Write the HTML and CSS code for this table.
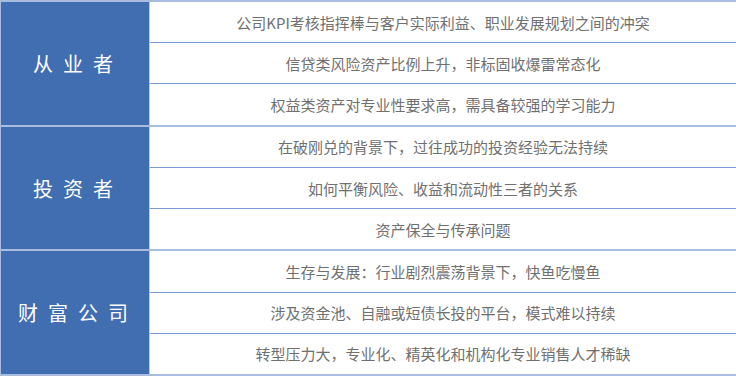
FILE: index.html
```html
<!DOCTYPE html>
<html lang="zh">
<head>
<meta charset="utf-8">
<link rel="stylesheet" href="styles.css">
</head>
<body>
<div class="table">
  <div class="group">
    <div class="label">从业者</div>
    <div class="items">
      <div class="item">公司KPI考核指挥棒与客户实际利益、职业发展规划之间的冲突</div>
      <div class="item">信贷类风险资产比例上升，非标固收爆雷常态化</div>
      <div class="item">权益类资产对专业性要求高，需具备较强的学习能力</div>
    </div>
  </div>
  <div class="group">
    <div class="label">投资者</div>
    <div class="items">
      <div class="item">在破刚兑的背景下，过往成功的投资经验无法持续</div>
      <div class="item">如何平衡风险、收益和流动性三者的关系</div>
      <div class="item">资产保全与传承问题</div>
    </div>
  </div>
  <div class="group">
    <div class="label">财富公司</div>
    <div class="items">
      <div class="item">生存与发展：行业剧烈震荡背景下，快鱼吃慢鱼</div>
      <div class="item">涉及资金池、自融或短债长投的平台，模式难以持续</div>
      <div class="item">转型压力大，专业化、精英化和机构化专业销售人才稀缺</div>
    </div>
  </div>
</div>
</body>
</html>
```
FILE: styles.css
```css
html, body {
  margin: 0;
  padding: 0;
  background: #ffffff;
}
body {
  width: 736px;
  height: 376px;
  overflow: hidden;
  font-family: "Noto Sans CJK SC", "Noto Sans", sans-serif;
}
.table {
  display: flex;
  flex-direction: column;
  height: 376px;
  border-top: 2px solid #a9bde0;
  box-sizing: border-box;
}
.group {
  flex: 1;
  display: grid;
  grid-template-columns: 150px 1fr;
  border-bottom: 2px solid #a9bde0;
}
.label {
  background: #416db1;
  border-left: 1px solid #a9bde0;
  border-right: 1px solid #b9c9e6;
  color: #ffffff;
  font-size: 20px;
  letter-spacing: 10px;
  padding-left: 6px;
  display: flex;
  align-items: center;
  justify-content: center;
}
.items {
  display: flex;
  flex-direction: column;
}
.item {
  flex: 1;
  display: flex;
  align-items: center;
  justify-content: center;
  font-size: 15px;
  color: #707070;
}
.item + .item {
  border-top: 1px solid #7a9bcf;
}
```
